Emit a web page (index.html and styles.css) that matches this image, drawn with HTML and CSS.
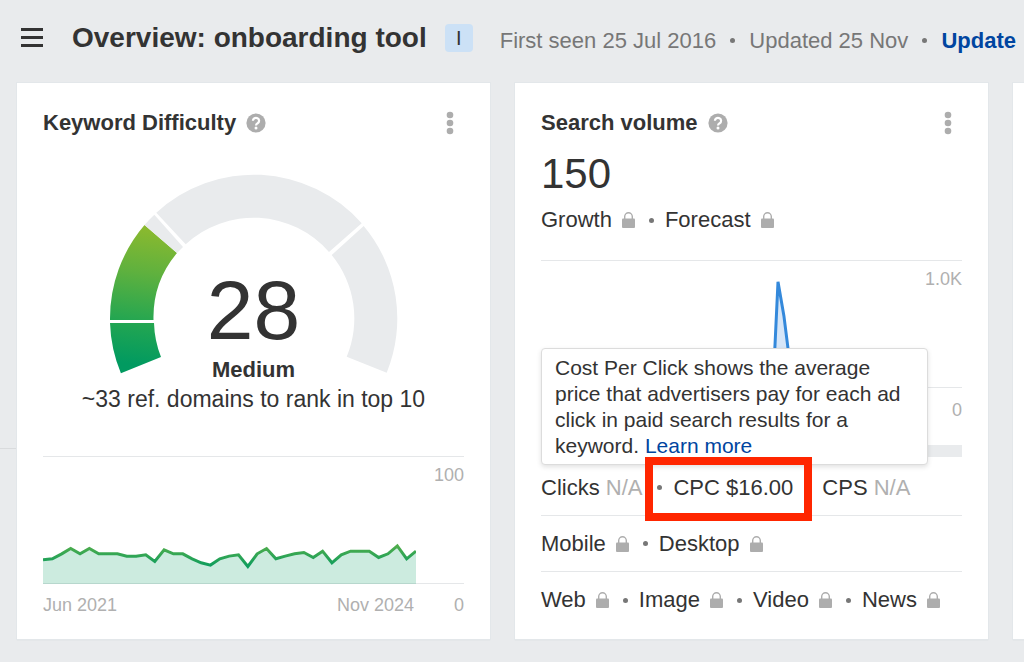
FILE: index.html
```html
<!DOCTYPE html>
<html lang="en">
  <head>
    <meta charset="UTF-8" />
    <meta name="viewport" content="width=device-width, initial-scale=1.0" />
    <title>Overview: onboarding tool</title>
    <link rel="stylesheet" href="styles.css">
  </head>
  <body>
    <svg class="sprite" aria-hidden="true">
      <symbol id="lock" viewBox="0 0 13 16">
        <path d="M2.7 7V4.6a3.8 3.8 0 0 1 7.6 0V7" fill="none" stroke="#adadad" stroke-width="1.4" />
        <rect y="6.4" width="13" height="9.6" rx="1" fill="#adadad" />
      </symbol>
      <symbol id="help" viewBox="0 0 20 20">
        <circle cx="10" cy="10" r="9.6" fill="#adadad" />
        <path d="M6.900 7.800a3.100 2.900 0 1 1 4.800 2.400C10.500 11 10 11.400 10 12.500" fill="none" stroke="#fff" stroke-width="2.200" />
        <circle cx="10" cy="15" r="1.500" fill="#fff" />
      </symbol>
      <symbol id="dots" viewBox="0 0 8 24">
        <circle cx="4" cy="4" r="3.300" />
        <circle cx="4" cy="12" r="3.300" />
        <circle cx="4" cy="20" r="3.300" />
      </symbol>
    </svg>

    <header class="header">
      <button type="button" class="menu-button" aria-label="Menu">
        <svg width="22" height="20" viewBox="0 0 22 20">
          <path d="M0 1.500h22M0 9.500h22M0 17.500h22" stroke="#333" stroke-width="3" />
        </svg>
      </button>
      <h1 class="header-title">Overview: onboarding tool</h1>
      <span class="badge">I</span>
      <div class="header-meta">
        <span>First seen 25 Jul 2016</span>
        <i class="dot"></i>
        <span>Updated 25 Nov</span>
        <i class="dot"></i>
        <a href="#" class="update-link">Update</a>
      </div>
    </header>

    <main class="board">
      <div class="rail"><hr /></div>

      <section class="card">
        <div class="card-header">
          <h2 class="card-title">Keyword Difficulty</h2>
          <svg class="help"><use href="#help" /></svg>
          <button type="button" class="more-button" aria-label="More"><svg><use href="#dots" /></svg></button>
        </div>

        <div class="gauge">
          <svg class="gauge-ring" viewBox="108 172 292 204">
            <defs>
              <linearGradient id="ring" gradientUnits="userSpaceOnUse" x1="160" y1="225" x2="140" y2="365">
                <stop offset="0" stop-color="#8fba2d" />
                <stop offset="0.35" stop-color="#5fb13e" />
                <stop offset="0.7" stop-color="#24a651" />
                <stop offset="1" stop-color="#019a60" />
              </linearGradient>
            </defs>
            <g fill="url(#ring)">
              <path d="M120.900 373.300A144 144 0 0 1 110 323H154A100 100 0 0 0 161 357Z" />
              <path d="M110 320A144 144 0 0 1 144.500 225L177 253A100 100 0 0 0 153.500 320Z" />
            </g>
            <g fill="#e9ebed">
              <path d="M144.500 225A144 144 0 0 1 154.300 214.700L183 247L177 253Z" />
              <path d="M156.300 212.700A144 144 0 0 1 361.700 223.300L329 252A100 100 0 0 0 185.700 244.300Z" />
              <path d="M363.700 226A144 144 0 0 1 386.700 372.700L346.700 356.700A100 100 0 0 0 331.700 255Z" />
            </g>
          </svg>
          <div class="gauge-text">
            <div class="gauge-value">28</div>
            <strong>Medium</strong>
          </div>
        </div>
        <p class="gauge-note">~33 ref. domains to rank in top 10</p>

        <div class="trend">
          <div class="trend-plot">
            <svg class="trend-line" viewBox="130 78 1118 383" preserveAspectRatio="none">
              <defs>
                <linearGradient id="trend" gradientUnits="userSpaceOnUse" x1="0" y1="346" x2="0" y2="408">
                  <stop offset="0" stop-color="#50ad4c" />
                  <stop offset="1" stop-color="#0d9d5e" />
                </linearGradient>
              </defs>
              <path fill="#029a60" fill-opacity="0.2" d="M130 388 158 385 186 370 213 354 241 370 269 354 297 370 353 370 381 377 409 377 438 373 465 393 493 358 521 370 549 370 577 385 604 397 632 404 660 385 688 377 716 373 744 408 772 370 800 354 828 385 856 377 884 370 912 366 940 381 968 362 996 397 1024 373 1052 362 1108 362 1136 381 1164 370 1192 346 1220 385 1248 362V461H130Z" />
              <path fill="none" stroke="url(#trend)" stroke-width="9" d="M130 388 158 385 186 370 213 354 241 370 269 354 297 370 353 370 381 377 409 377 438 373 465 393 493 358 521 370 549 370 577 385 604 397 632 404 660 385 688 377 716 373 744 408 772 370 800 354 828 385 856 377 884 370 912 366 940 381 968 362 996 397 1024 373 1052 362 1108 362 1136 381 1164 370 1192 346 1220 385 1248 362" />
            </svg>
            <span class="axis-max">100</span>
          </div>
          <div class="trend-axis">
            <span>Jun 2021</span>
            <span>Nov 2024</span>
            <span class="axis-min">0</span>
          </div>
        </div>
      </section>

      <section class="card">
        <div class="card-header">
          <h2 class="card-title">Search volume</h2>
          <svg class="help"><use href="#help" /></svg>
          <button type="button" class="more-button" aria-label="More"><svg><use href="#dots" /></svg></button>
        </div>
        <div class="volume">150</div>
        <div class="list volume-links">
          <span>Growth</span><svg class="lock"><use href="#lock" /></svg>
          <i class="dot"></i>
          <span>Forecast</span><svg class="lock"><use href="#lock" /></svg>
        </div>

        <div class="trend-plot">
          <svg class="trend-line" viewBox="0 0 373 128" preserveAspectRatio="none">
            <path d="M0 127H232L237 21 243 56 247 88 252 127H373" fill="#d6e6f8" stroke="#3489db" stroke-width="3" stroke-linejoin="bevel" />
          </svg>
          <span class="axis-max">1.0K</span>
        </div>
        <div class="volume-axis">0</div>
        <div class="volume-bar"></div>

        <div class="list row">
          <span>Clicks <span class="muted">N/A</span></span>
          <span class="cpc"><i class="dot"></i>CPC $16.00</span>
          <span>CPS <span class="muted">N/A</span></span>
          <div class="tooltip" role="tooltip">
            Cost Per Click shows the average price that advertisers pay for each ad click in paid search results for a keyword. <a href="#">Learn more</a>
          </div>
        </div>
        <div class="list row">
          <span>Mobile</span><svg class="lock"><use href="#lock" /></svg>
          <i class="dot"></i>
          <span>Desktop</span><svg class="lock"><use href="#lock" /></svg>
        </div>
        <div class="list row">
          <span>Web</span><svg class="lock"><use href="#lock" /></svg>
          <i class="dot"></i>
          <span>Image</span><svg class="lock"><use href="#lock" /></svg>
          <i class="dot"></i>
          <span>Video</span><svg class="lock"><use href="#lock" /></svg>
          <i class="dot"></i>
          <span>News</span><svg class="lock"><use href="#lock" /></svg>
        </div>
      </section>

      <section class="card card-next"></section>
    </main>
  </body>
</html>
```
FILE: styles.css
```css
:root {
  --bg: #e9ebed;
  --line: #e5e7e9;
  --text: #333333;
  --text-secondary: #777777;
  --muted: #b0b0b0;
  --link: #0045a0;
}

* {
  margin: 0;
  padding: 0;
  box-sizing: border-box;
}

body {
  font-family: "Liberation Sans", Arial, Helvetica, sans-serif;
  font-size: 22px;
  line-height: 28px;
  background: var(--bg);
  color: var(--text);
  overflow-x: hidden;
}

button {
  background: none;
  border: none;
  cursor: pointer;
}

a {
  color: var(--link);
  text-decoration: none;
}

svg {
  display: block;
}

.sprite {
  position: absolute;
  width: 0;
  height: 0;
}

.header {
  display: flex;
  align-items: center;
  padding: 21px 8px 28px 21px;
  white-space: nowrap;
}

.menu-button {
  margin-right: 29px;
}

.header-title {
  font-size: 28px;
  line-height: 34px;
}

.badge {
  width: 28px;
  height: 28px;
  margin-left: 18px;
  border-radius: 4px;
  background: #cce1f6;
  font-size: 20px;
  text-align: center;
}

.header-meta {
  display: flex;
  flex: 1;
  align-items: center;
  justify-content: space-between;
  margin-left: 27px;
  padding-top: 5px;
  color: var(--text-secondary);
}

.update-link {
  font-weight: 700;
}

.dot {
  flex: none;
  width: 5px;
  height: 5px;
  border-radius: 50%;
  background: #777777;
}

.board {
  display: grid;
  grid-template-columns: 17px minmax(0, 473fr) minmax(0, 498fr) 36px;
  padding-bottom: 22px;
}

.rail hr {
  margin-top: 365px;
  border: none;
  border-top: 1px solid #d9dbdd;
}

.card {
  padding: 26px 26px 11px;
  background: #ffffff;
  box-shadow: 0 0 0 1px #e3e7ea, 0 1px 1px #d0d3d6;
}

.card + .card {
  margin-left: 25px;
}

.card-next {
  padding: 0;
}

.card-header {
  display: flex;
  align-items: center;
}

.card-title {
  font-size: 22px;
}

.help {
  width: 20px;
  height: 20px;
  margin-left: 10px;
}

.more-button {
  margin-left: auto;
  padding: 0 10px;
}

.more-button svg {
  width: 8px;
  height: 24px;
  fill: #adadad;
}

/* Keyword difficulty */
.gauge {
  display: grid;
  justify-content: center;
  margin-top: 35px;
}

.gauge-ring,
.gauge-text {
  grid-area: 1 / 1;
}

.gauge-ring {
  width: 292px;
  height: 204px;
}

.gauge-text {
  align-self: end;
  text-align: center;
}

.gauge-value {
  font-size: 84px;
  line-height: 92px;
}

.gauge-text strong {
  display: block;
  margin-bottom: -8px;
}

.gauge-note {
  margin-top: 9px;
  font-size: 23px;
  text-align: center;
}

.trend {
  margin-top: 43px;
}

.trend-plot {
  display: flex;
  align-items: flex-start;
  justify-content: space-between;
  height: 128px;
  border-top: 1px solid var(--line);
  border-bottom: 1px solid var(--line);
}

.trend-line {
  width: 373px;
  height: 127px;
}

.axis-max,
.trend-axis,
.volume-axis {
  color: var(--muted);
  font-size: 18px;
}

.axis-max {
  margin-top: 4px;
}

.trend-axis {
  display: flex;
  justify-content: space-between;
  margin-top: 7px;
}

.axis-min {
  flex: 0 0 50px;
  text-align: right;
}

.trend-axis span:first-child {
  flex: 1;
}

/* Search volume */
.volume {
  margin-top: 12px;
  font-size: 42px;
  line-height: 50px;
}

.list {
  display: flex;
  align-items: center;
  white-space: nowrap;
}

.volume-links {
  margin: 7px 0 26px;
}

.lock {
  width: 13px;
  height: 16px;
  margin-left: 10px;
}

.list > .dot {
  margin: 0 11px 0 14px;
}

.volume-axis {
  margin-top: 8px;
  text-align: right;
}

.volume-bar {
  height: 12px;
  margin: 21px 0 3px;
  background: var(--bg);
}

.row {
  position: relative;
  height: 56px;
  border-bottom: 1px solid var(--line);
}

.row:last-child {
  border-bottom: none;
}

.muted {
  color: var(--muted);
}

.cpc {
  position: relative;
  display: flex;
  align-items: center;
  gap: 11px;
  margin: 0 29px 0 15px;
}

/* callout frame, drawn over the tooltip */
.cpc::after {
  content: "";
  position: absolute;
  inset: -17px -19px -19px -12px;
  z-index: 2;
  border: 8px solid #ff2600;
}

.tooltip {
  position: absolute;
  bottom: 50px;
  left: 0;
  z-index: 1;
  width: 387px;
  padding: 6px 13px 5px;
  border: 1px solid #dcdcdc;
  border-radius: 4px;
  background: #ffffff;
  box-shadow: 0 2px 5px rgba(0, 0, 0, 0.12);
  font-size: 21px;
  line-height: 26px;
  white-space: normal;
}
```
